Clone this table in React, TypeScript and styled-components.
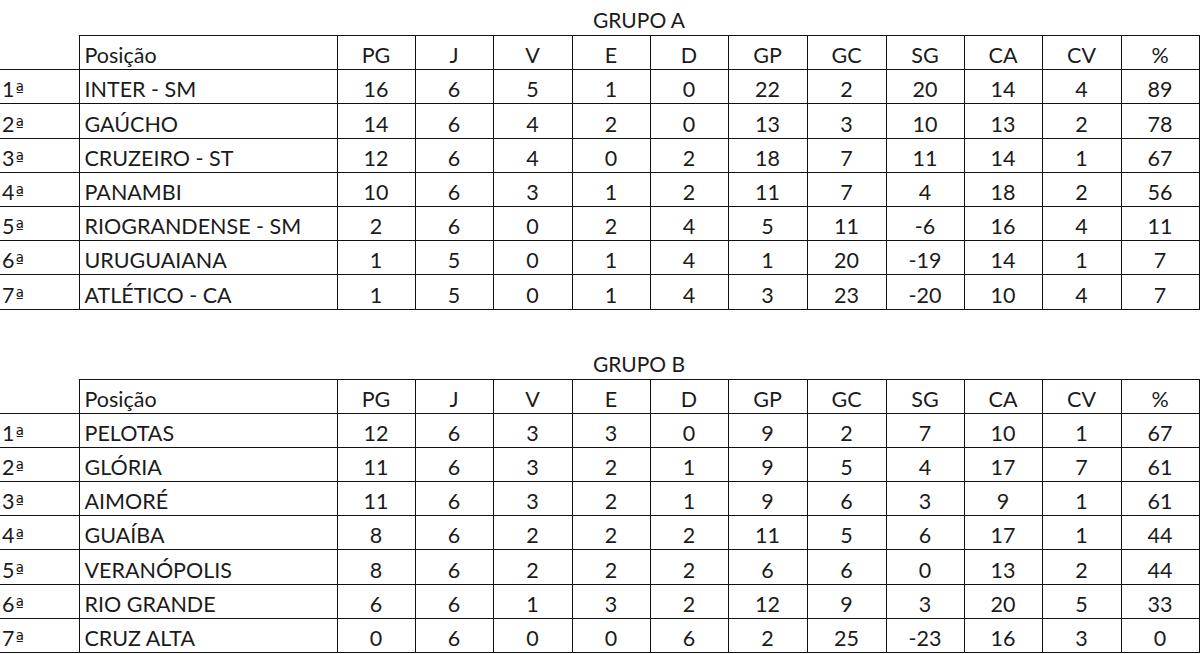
import styled, { createGlobalStyle } from 'styled-components'

const GlobalStyle = createGlobalStyle`
  html, body {
    margin: 0;
    padding: 0;
    background: #ffffff;
  }
  body {
    font-family: Lato, 'Noto Sans', sans-serif;
    color: #1b1b1b;
  }
`

type Row = [number, string, ...number[]]

const headers = ['PG', 'J', 'V', 'E', 'D', 'GP', 'GC', 'SG', 'CA', 'CV', '%']
const widths = [78, 78, 79, 78, 78, 79, 79, 78, 78, 79, 78]

const grupoA: Row[] = [
  [1, 'INTER - SM', 16, 6, 5, 1, 0, 22, 2, 20, 14, 4, 89],
  [2, 'GAÚCHO', 14, 6, 4, 2, 0, 13, 3, 10, 13, 2, 78],
  [3, 'CRUZEIRO - ST', 12, 6, 4, 0, 2, 18, 7, 11, 14, 1, 67],
  [4, 'PANAMBI', 10, 6, 3, 1, 2, 11, 7, 4, 18, 2, 56],
  [5, 'RIOGRANDENSE - SM', 2, 6, 0, 2, 4, 5, 11, -6, 16, 4, 11],
  [6, 'URUGUAIANA', 1, 5, 0, 1, 4, 1, 20, -19, 14, 1, 7],
  [7, 'ATLÉTICO - CA', 1, 5, 0, 1, 4, 3, 23, -20, 10, 4, 7]
]

const grupoB: Row[] = [
  [1, 'PELOTAS', 12, 6, 3, 3, 0, 9, 2, 7, 10, 1, 67],
  [2, 'GLÓRIA', 11, 6, 3, 2, 1, 9, 5, 4, 17, 7, 61],
  [3, 'AIMORÉ', 11, 6, 3, 2, 1, 9, 6, 3, 9, 1, 61],
  [4, 'GUAÍBA', 8, 6, 2, 2, 2, 11, 5, 6, 17, 1, 44],
  [5, 'VERANÓPOLIS', 8, 6, 2, 2, 2, 6, 6, 0, 13, 2, 44],
  [6, 'RIO GRANDE', 6, 6, 1, 3, 2, 12, 9, 3, 20, 5, 33],
  [7, 'CRUZ ALTA', 0, 6, 0, 0, 6, 2, 25, -23, 16, 3, 0]
]

function Grupo({ title, rows }: { title: string; rows: Row[] }) {
  return (
    <Group>
      <Title>{title}</Title>
      <Table>
        <colgroup>
          <Col $w={79} />
          <Col $w={258} />
          {widths.map((w, i) => (
            <Col key={i} $w={w} />
          ))}
        </colgroup>
        <tbody>
          <Tr>
            <PosCell $head />
            <NameCell>Posição</NameCell>
            {headers.map(h => (
              <NumCell key={h}>{h}</NumCell>
            ))}
          </Tr>
          {rows.map(([pos, name, ...nums]) => (
            <Tr key={pos}>
              <PosCell>
                {pos}
                <Ord>ª</Ord>
              </PosCell>
              <NameCell>{name}</NameCell>
              {nums.map((n, i) => (
                <NumCell key={i}>{n}</NumCell>
              ))}
            </Tr>
          ))}
        </tbody>
      </Table>
    </Group>
  )
}

export default function App() {
  return (
    <Page>
      <GlobalStyle />
      <Grupo title="GRUPO A" rows={grupoA} />
      <Spacer />
      <Grupo title="GRUPO B" rows={grupoB} />
    </Page>
  )
}

const { Page, Group, Title, Spacer, Table, Col, Tr, PosCell, Ord, NameCell, NumCell } = {
  Page: styled.div`
    width: 1200px;
    display: flex;
    flex-direction: column;
  `,
  Group: styled.section`
    display: flex;
    flex-direction: column;
  `,
  Title: styled.div`
    height: 35px;
    width: 1199px;
    box-sizing: border-box;
    padding-left: 79px;
    text-align: center;
    font-size: 21px;
    line-height: 40px;
  `,
  Spacer: styled.div`
    height: 34px;
  `,
  Table: styled.table`
    width: 1199px;
    border-collapse: collapse;
    table-layout: fixed;
    font-size: 21.5px;
  `,
  Col: styled.col<{ $w: number }>`
    width: ${({ $w }) => $w}px;
  `,
  Tr: styled.tr`
    height: 34.2px;
  `,
  PosCell: styled.td<{ $head?: boolean }>`
    padding: 0 0 1px 2px;
    border-left: none;
    border-bottom: 1px solid #111;
    border-top: ${({ $head }) => ($head ? 'none' : '1px solid #111')};
    vertical-align: bottom;
    white-space: nowrap;
  `,
  Ord: styled.span`
    font-family: 'DejaVu Sans', sans-serif;
    font-size: 18px;
    margin-left: 1px;
  `,
  NameCell: styled.td`
    padding: 0 0 1px 5px;
    border: 1px solid #111;
    vertical-align: bottom;
    white-space: nowrap;
  `,
  NumCell: styled.td`
    padding: 0 0 1px 0;
    border: 1px solid #111;
    text-align: center;
    vertical-align: bottom;
  `
}
